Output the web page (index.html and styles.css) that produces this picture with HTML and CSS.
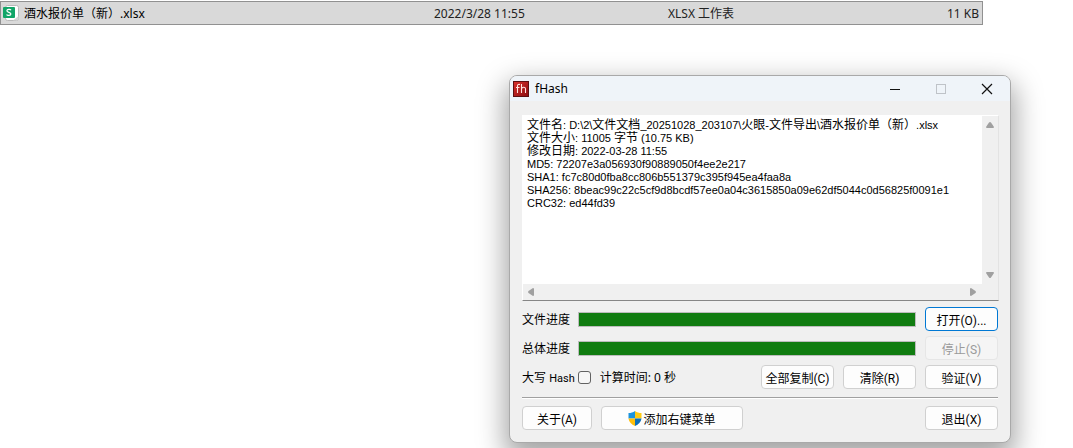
FILE: index.html
```html
<!DOCTYPE html>
<html lang="zh-CN">
<head>
    <meta charset="UTF-8">
    <meta name="viewport" content="width=device-width, initial-scale=1.0">
    <title>fHash</title>
    <link rel="stylesheet" href="styles.css">
</head>
<body>
    <!-- 文件列表 -->
    <div class="file-row">
        <div class="file-name">
            <svg class="file-icon" width="16" height="16" viewBox="0 0 16 16">
                <rect x="2.5" y="0.5" width="13" height="15" rx="2" fill="#fff" stroke="#b9b9b9"/>
                <path d="M15.5 11v2.500a2 2 0 0 1-2 2H10z" fill="#d5d5d5"/>
                <rect x="0" y="2" width="12" height="11" rx="1" fill="#12a568"/>
                <path d="M8 5.200C7.400 4 4 4 3.900 5.800c0 2 4 1.200 4 3.200C7.800 10.800 4.200 10.700 3.600 9.400" fill="none" stroke="#fff" stroke-width="1.200"/>
            </svg>
            <span>酒水报价单（新）.xlsx</span>
        </div>
        <div class="file-date">2022/3/28 11:55</div>
        <div class="file-type">XLSX 工作表</div>
        <div class="file-size">11 KB</div>
    </div>

    <!-- fHash 窗口 -->
    <div class="window">
        <div class="title-bar">
            <svg class="app-icon" width="16" height="16" viewBox="0 0 16 16">
                <defs>
                    <linearGradient id="red" x1="0" y1="0" x2="1" y2="1">
                        <stop offset="0" stop-color="#d8302c"/>
                        <stop offset="1" stop-color="#8c0d10"/>
                    </linearGradient>
                </defs>
                <rect x="0.5" y="0.5" width="15" height="15" fill="url(#red)" stroke="#5c1012"/>
                <path d="M7 3.500C5 3 4.500 4 4.500 5V12M3 6.500H6.500M8.500 3V12M8.500 8C9 6 12.500 5.500 12.500 8V12" fill="none" stroke="#ffe4e0" stroke-width="1.100"/>
            </svg>
            <span class="title">fHash</span>
            <button class="win-btn" aria-label="最小化">
                <svg width="12" height="12" viewBox="0 0 12 12"><path d="M1 6.500H11" stroke="#111"/></svg>
            </button>
            <button class="win-btn" aria-label="最大化" disabled>
                <svg width="12" height="12" viewBox="0 0 12 12"><rect x="1.500" y="1.500" width="9" height="9" fill="none" stroke="#bfc3c8"/></svg>
            </button>
            <button class="win-btn" aria-label="关闭">
                <svg width="12" height="12" viewBox="0 0 12 12"><path d="M1 1L11 11M11 1L1 11" stroke="#111" stroke-width="1.200"/></svg>
            </button>
        </div>

        <div class="content">
            <div class="log-box">
                <output class="log">文件名<span>: D:\2\</span>文件文档<span>_20251028_203107\</span>火眼<span>-</span>文件导出<span>\</span>酒水报价单（新）<span>.xlsx</span>
文件大小<span>: 11005 </span>字节<span> (10.75 KB)</span>
修改日期<span>: 2022-03-28 11:55</span>
<span>MD5: 72207e3a056930f90889050f4ee2e217</span>
<span>SHA1: fc7c80d0fba8cc806b551379c395f945ea4faa8a</span>
<span>SHA256: 8beac99c22c5cf9d8bcdf57ee0a04c3615850a09e62df5044c0d56825f0091e1</span>
<span>CRC32: ed44fd39</span></output>
                <div class="scroll-y">
                    <svg width="10" height="8" viewBox="0 0 10 8"><path d="M4 1.500Q5 0.500 6 1.500L9 6Q9 7 8 7H2Q1 7 1 6z" fill="#a0a0a0"/></svg>
                    <svg width="10" height="8" viewBox="0 0 10 8"><path d="M4 6.500Q5 7.500 6 6.500L9 2Q9 1 8 1H2Q1 1 1 2z" fill="#a0a0a0"/></svg>
                </div>
                <div class="scroll-x">
                    <svg width="8" height="10" viewBox="0 0 8 10"><path d="M1.500 4Q0.500 5 1.500 6L6 9Q7 9 7 8V2Q7 1 6 1z" fill="#a0a0a0"/></svg>
                    <svg width="8" height="10" viewBox="0 0 8 10"><path d="M6.500 4Q7.500 5 6.500 6L2 9Q1 9 1 8V2Q1 1 2 1z" fill="#a0a0a0"/></svg>
                </div>
            </div>

            <div class="controls">
                <div class="progress-row">
                    <label for="fileProgress">文件进度</label>
                    <progress id="fileProgress" value="100" max="100"></progress>
                </div>
                <button class="default">打开(O)...</button>

                <div class="progress-row">
                    <label for="totalProgress">总体进度</label>
                    <progress id="totalProgress" value="100" max="100"></progress>
                </div>
                <button disabled>停止(S)</button>

                <div class="options">
                    <label for="upper">大写 <span class="latin">Hash</span></label>
                    <input type="checkbox" id="upper">
                    <span class="time">计算时间: 0 秒</span>
                    <button>全部复制(C)</button>
                    <button>清除(R)</button>
                </div>
                <button>验证(V)</button>
            </div>

            <hr>

            <div class="footer">
                <button class="about">关于(A)</button>
                <button class="menu">
                    <svg width="14" height="15" viewBox="0 0 14 15">
                        <path d="M7 0C5 1.500 3 2 0.500 2V7.500H7z" fill="#1b93dc"/>
                        <path d="M7 0C9 1.500 11 2 13.500 2V7.500H7z" fill="#ffcb13"/>
                        <path d="M0.500 7.500C1 11 3.500 13.500 7 15V7.500z" fill="#ffbf0a"/>
                        <path d="M13.500 7.500C13 11 10.500 13.500 7 15V7.500z" fill="#0c70bd"/>
                    </svg>添加右键菜单
                </button>
                <button class="exit">退出(X)</button>
            </div>
        </div>
    </div>
</body>
</html>
```
FILE: styles.css
```css
body {
    margin: 0;
    background-color: #fff;
    color: #000;
    font-family: "Noto Sans", "Noto Sans CJK SC", sans-serif;
    font-size: 12px;
    overflow: hidden; /* 窗口阴影不产生滚动条 */
}
svg {
    display: block;
    flex: none;
}

/* 文件列表 */
.file-row {
    display: grid;
    grid-template-columns: 431px 234px 1fr auto;
    align-items: center;
    height: 22px;
    margin: 1px 90px 0 0;
    padding: 0 3px 0 2px;
    border: 1px solid #919191;
    background-color: #d9d9d9;
    color: #222;
}
.file-name {
    display: flex;
    align-items: center;
    gap: 5px;
    color: #000;
}

/* 窗口 */
.window {
    margin: 50px 62px 5px 509px;
    border: 1px solid #a9a9a9;
    border-radius: 8px;
    background-color: #f0f0f0;
    box-shadow: 0 12px 28px 4px rgba(0, 0, 0, 0.36);
    overflow: hidden;
}
.title-bar {
    display: flex;
    align-items: center;
    height: 25px;
    padding-left: 3px;
    background-color: #eff4f9;
}
.title {
    flex: 1;
    padding-left: 6px;
}
.win-btn {
    display: flex;
    align-items: center;
    justify-content: center;
    width: 46px;
    height: 25px;
    padding: 0;
    border: none;
    border-radius: 0;
    background: none;
}
.content {
    padding: 14px 12px 12px;
}

/* 结果文本框 */
.log-box {
    display: grid;
    grid-template-columns: 1fr 16px;
    grid-template-rows: 168px 16px;
    border: 1px solid #fff;
    border-right-color: #e3e3e3;
    border-bottom-color: #868686;
    margin-right: -1px;
    background-color: #f0f0f0;
}
.log {
    padding: 2px 4px;
    background-color: #fff;
    white-space: pre;
    line-height: 13px;
    overflow: hidden;
}
.log span {
    font-family: "Liberation Sans", sans-serif;
    font-size: 11px;
    line-height: 1px; /* 不撑高所在行 */
}
.latin {
    font-family: Roboto, sans-serif;
    font-size: 11px;
}
.scroll-y {
    display: flex;
    flex-direction: column;
    align-items: center;
    justify-content: space-between;
    padding: 5px 0;
}
.scroll-x {
    display: flex;
    align-items: center;
    justify-content: space-between;
    padding: 0 5px 0 4px;
}

/* 按钮 */
button {
    height: 24px;
    padding: 0;
    border: 1px solid #d0d0d0;
    border-radius: 4px;
    background-color: #fdfdfd;
    color: #000;
    font-family: Roboto, "Noto Sans CJK SC", sans-serif;
    font-size: 12px;
}
button.default {
    border-color: #0078d4;
}
button:disabled {
    border-color: #e6e6e6;
    background-color: #f5f5f5;
    color: #9a9a9a;
}
.title-bar .win-btn:disabled {
    background: none;
}

/* 进度和选项 */
.controls {
    display: grid;
    grid-template-columns: 1fr 73px;
    gap: 5px 9px;
    margin-top: 6px;
}
.progress-row,
.options {
    display: flex;
    align-items: center;
}
.progress-row {
    gap: 8px;
}
progress {
    appearance: none;
    flex: 1;
    min-width: 0;
    height: 15px;
    border: 1px solid #bcbcbc;
    box-sizing: border-box;
    background-color: #e6e6e6;
}
progress::-webkit-progress-bar {
    background-color: #e6e6e6;
}
progress::-webkit-progress-value {
    background-color: #107c10;
}
input[type="checkbox"] {
    appearance: none;
    width: 13px;
    height: 13px;
    margin: 0 9px 0 3px;
    border: 1px solid #626262;
    border-radius: 3px;
    background-color: #f6f6f6;
}
.time {
    flex: 1;
}
.options button {
    width: 73px;
    margin-left: 9px;
}
hr {
    height: 1px;
    margin: 8px 0 7px;
    border: none;
    border-top: 1px solid #a0a0a0;
    background-color: #fff;
}

/* 底部按钮 */
.footer {
    display: flex;
    gap: 9px;
}
.about {
    width: 70px;
}
.menu {
    display: flex;
    align-items: center;
    justify-content: center;
    gap: 1px;
    width: 142px;
}
.exit {
    width: 73px;
    margin-left: auto;
}
```
